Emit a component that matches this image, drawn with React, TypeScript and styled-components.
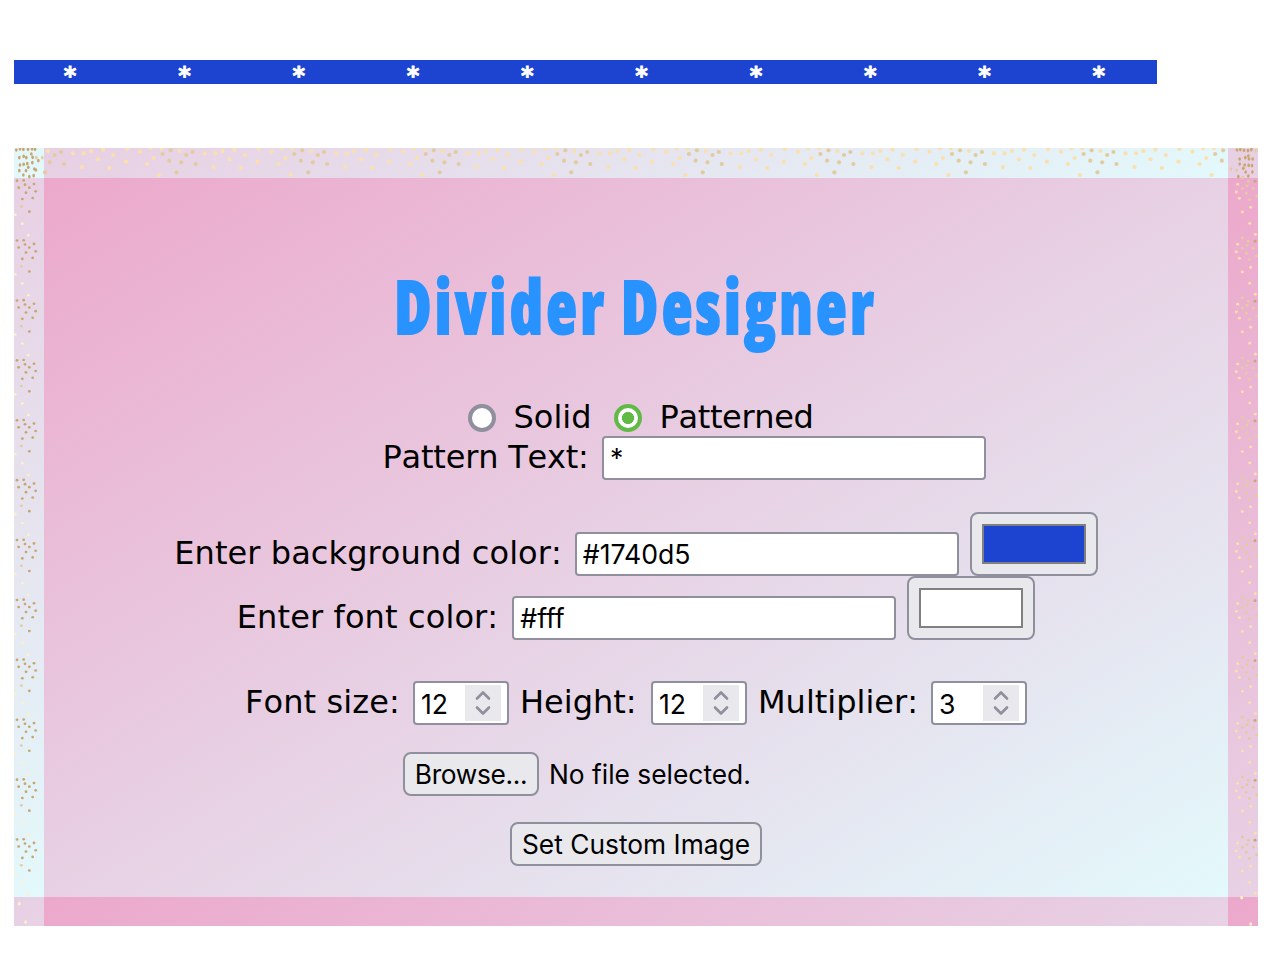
import React from "react";
import styled, { createGlobalStyle } from "styled-components";

const GlobalStyle = createGlobalStyle`
  * { box-sizing: border-box; }
  body { margin: 0; background: #fff; }
`;

const Page = styled.main`
  width: 1274px;
  height: 970px;
  padding: 60px 16px 0 14px;
  overflow: hidden;
  color: #000;
  font: 32px "DejaVu Sans", Verdana, sans-serif;
  font-kerning: none;
`;

const Divider = styled.div`
  display: flex;
  width: 1143px;
  height: 24px;
  background: #1d44d1;
  color: #fff;
  font: bold 24px/24px "DejaVu Sans", Verdana, sans-serif;
  -webkit-text-stroke: 0.8px #fff;
`;

const DividerItem = styled.span`
  flex: 1;
  text-align: center;
  padding-top: 4px;
  padding-right: 2px;
`;

const Panel = styled.section`
  position: relative;
  display: flex;
  flex-direction: column;
  width: 1244px;
  height: 778px;
  margin-top: 64px;
  border: 30px solid transparent;
  border-bottom-width: 29px;
  background: linear-gradient(to bottom right, #eca8cb, #e3f9fc) padding-box
    0 0 / 1184px 719px repeat;
  background-clip: border-box;
`;

const Confetti = styled.svg`
  position: absolute;
  left: -30px;
  top: -30px;
  pointer-events: none;
`;

const Title = styled.h1`
  display: flex;
  justify-content: center;
  height: 96px;
  margin: 80px 0 44px;
  color: #2893ff;
`;

const TitleText = styled.span`
  font: 800 75px/94px "Open Sans", sans-serif;
  font-stretch: 75%;
  letter-spacing: 4px;
  word-spacing: -1px;
  white-space: nowrap;
  -webkit-text-stroke: 1.8px #2893ff;
  transform: scaleX(0.845);
`;

const Row = styled.div<{ $h: number; $top?: number; $left?: number }>`
  display: flex;
  justify-content: center;
  align-items: flex-end;
  height: ${(p) => p.$h}px;
  margin-top: ${(p) => p.$top ?? 0}px;
  padding-left: ${(p) => p.$left ?? 0}px;
`;

const Label = styled.label<{ $w: number; $drop?: number; $track?: number }>`
  width: ${(p) => p.$w}px;
  flex: none;
  line-height: 44px;
  height: 45px;
  margin-bottom: ${(p) => -(p.$drop ?? 0)}px;
  letter-spacing: ${(p) => p.$track ?? 0}px;
  white-space: nowrap;
`;

const Radio = styled.span<{ $on?: boolean }>`
  width: 28px;
  height: 28px;
  margin: 0 17.5px 4px 0;
  border-radius: 50%;
  border: 4px solid ${(p) => (p.$on ? "#62ba46" : "#8f8f9d")};
  background: ${(p) =>
    p.$on ? "radial-gradient(circle, #62ba46 5.7px, #fff 6.3px)" : "#fff"};
`;

const TextInput = styled.input`
  width: 384px;
  height: 44px;
  padding: 0 6px;
  border: 2px solid #8f8f9d;
  border-radius: 4px;
  background: #fff;
  color: #000;
  outline: none;
  font: 26.67px Inter, sans-serif;
`;

const Swatch = styled.button`
  width: 128px;
  height: 64px;
  margin-left: 11px;
  padding: 10px;
  border: 2px solid #8f8f9d;
  border-radius: 8px;
  background: #e9e9ed;
`;

const SwatchColor = styled.span<{ $color: string }>`
  display: block;
  height: 40px;
  border: 2px solid #808080;
  background: ${(p) => p.$color};
`;

const NumberBox = styled.div`
  display: flex;
  justify-content: space-between;
  width: 96px;
  height: 44px;
  margin-right: 11px;
  padding: 2px 6px 2px 6px;
  border: 2px solid #8f8f9d;
  border-radius: 4px;
  background: #fff;
  font: 26.67px/38px Inter, sans-serif;
  &:last-child { margin-right: 0; }
`;

const Spinner = styled.svg`
  width: 36px;
  height: 36px;
  background: #e9e9ed;
`;

const Button = styled.button<{ $w: number; $track?: number }>`
  width: ${(p) => p.$w}px;
  height: 44px;
  padding: 0;
  border: 2px solid #8f8f9d;
  border-radius: 8px;
  background: #e9e9ed;
  color: #000;
  white-space: nowrap;
  letter-spacing: ${(p) => p.$track ?? 0}px;
  font: 26.35px Inter, sans-serif;
`;

const FileStatus = styled.span`
  width: 320px;
  margin-left: 10px;
  font: 26.35px/44px Inter, sans-serif;
  height: 44px;
`;

type Dot = [number, number, number?];
const TONES = ["#c9a66f", "#e3cba0", "#fbe0ae", "#fff0c8"];

/* Coordinates are measured in thirds of a pixel from the panel corner. */
const topDots: Dot[] = [
  [102, 9, 2], [122, 21, 1], [141, 12, 1], [177, 16, 2], [209, 16, 2], [231, 9, 2],
  [267, 5, 2], [298, 21, 2], [339, 3, 2], [378, 11, 2], [336, 41, 2], [252, 34, 2],
  [107, 43, 1], [150, 48, 1], [204, 57, 2], [286, 60, 2], [93, 73, 1], [399, 48, 2],
  [419, 30, 2], [410, 1, 2], [442, 1, 2], [446, 18, 1], [470, 7, 1], [466, 38, 1],
  [435, 81, 2],
];
const leftDots: Dot[] = [
  [9, 98], [29, 97], [33, 110], [14, 119], [46, 119], [60, 108], [65, 130], [36, 134],
  [25, 153], [56, 150], [22, 175, 1], [46, 191], [4, 200, 3], [25, 227, 3], [43, 262, 3],
];
const rightDots: Dot[] = [
  [3703, 100, 1], [3723, 100], [3671, 109, 2], [3699, 113, 1], [3685, 121, 1],
  [3718, 121, 1], [3667, 132, 2], [3697, 136, 1], [3728, 144, 1], [3676, 151, 2],
  [3706, 155, 1], [3710, 178, 2], [3685, 192, 2], [3707, 226, 2], [3724, 259, 2],
  [3685, 270, 1],
];
const cornerDots: Dot[] = [
  [7, 6], [18, 3], [28, 4], [42, 4], [54, 3], [63, 4], [52, 18], [16, 29], [29, 25],
  [37, 29], [56, 28], [67, 29, 1], [73, 38], [85, 29, 1], [18, 51], [29, 49], [40, 47],
  [55, 44], [43, 58], [16, 68], [36, 68], [61, 63], [66, 66], [28, 81], [46, 86], [59, 83],
  [3669, 6], [3679, 5], [3690, 7], [3702, 8], [3712, 5], [3725, 9, 1], [3677, 33],
  [3694, 29], [3703, 24], [3705, 33], [3716, 33], [3677, 48], [3692, 51], [3704, 52],
  [3714, 53], [3651, 63, 1], [3668, 67, 1], [3688, 61], [3695, 72], [3715, 72],
  [3673, 86], [3686, 89, 1], [3703, 84],
];
const bottomDots: Dot[] = [[16, 2267, 3], [35, 2322, 3], [3683, 2249, 3], [3710, 2328, 3]];

const range = (n: number) => Array.from({ length: n }, (_, i) => i);

function Dots({ dots, rx, ry }: { dots: Dot[]; rx: number; ry: number }) {
  return (
    <>
      {dots.map(([x, y, tone = 0], i) => (
        <ellipse key={i} cx={x / 3} cy={y / 3} rx={rx} ry={ry} fill={TONES[tone]} />
      ))}
    </>
  );
}

function ConfettiBorder() {
  return (
    <Confetti width="1244" height="778" viewBox="0 0 1244 778" aria-hidden="true">
      {range(9).map((i) => (
        <g key={`t${i}`} transform={`translate(${i * 131.56} 0)`}>
          <Dots dots={topDots} rx={2.1} ry={2.1} />
        </g>
      ))}
      {range(12).map((i) => (
        <g key={`s${i}`} transform={`translate(0 ${i * 59.9})`}>
          <Dots dots={leftDots} rx={1.4} ry={1.3} />
          <Dots dots={rightDots} rx={1.5} ry={1.4} />
        </g>
      ))}
      <Dots dots={cornerDots} rx={1.35} ry={1.8} />
      <Dots dots={bottomDots} rx={1.5} ry={1.8} />
    </Confetti>
  );
}

function NumberInput({ value }: { value: string }) {
  return (
    <NumberBox>
      {value}
      <Spinner viewBox="0 0 36 36" fill="none" stroke="#8f8f9d" strokeWidth="2.6">
        <path d="M12 13.5 18 7.5 24 13.5M12 22.5 18 28.5 24 22.5" strokeLinecap="round" strokeLinejoin="round" />
      </Spinner>
    </NumberBox>
  );
}

export default function App() {
  return (
    <Page>
      <GlobalStyle />
      <Divider>
        {range(10).map((i) => (
          <DividerItem key={i}>*</DividerItem>
        ))}
      </Divider>
      <Panel>
        <ConfettiBorder />
        <Title>
          <TitleText>Divider Designer</TitleText>
        </Title>
        <Row $h={38} $left={11}>
          <Radio />
          <Label $w={100.5} $drop={4}>Solid</Label>
          <Radio $on />
          <Label $w={155.5} $drop={4} $track={-0.35}>Patterned</Label>
        </Row>
        <Row $h={44} $left={96.5}>
          <Label $w={219.5} $track={-0.2}>Pattern Text:</Label>
          <TextInput defaultValue="*" />
        </Row>
        <Row $h={64} $top={32}>
          <Label $w={400.5} $track={0.08}>Enter background color:</Label>
          <TextInput defaultValue="#1740d5" />
          <Swatch><SwatchColor $color="#1d44d1" /></Swatch>
        </Row>
        <Row $h={64}>
          <Label $w={275.5} $track={0.12}>Enter font color:</Label>
          <TextInput defaultValue="#fff" />
          <Swatch><SwatchColor $color="#fff" /></Swatch>
        </Row>
        <Row $h={44} $top={41}>
          <Label $w={168} $track={0.1}>Font size:</Label>
          <NumberInput value="12" />
          <Label $w={131}>Height:</Label>
          <NumberInput value="12" />
          <Label $w={173}>Multiplier:</Label>
          <NumberInput value="3" />
        </Row>
        <Row $h={44} $top={27}>
          <Button $w={136} $track={-0.35}>Browse...</Button>
          <FileStatus>No file selected.</FileStatus>
        </Row>
        <Row $h={44} $top={26}>
          <Button $w={252}>Set Custom Image</Button>
        </Row>
      </Panel>
    </Page>
  );
}
